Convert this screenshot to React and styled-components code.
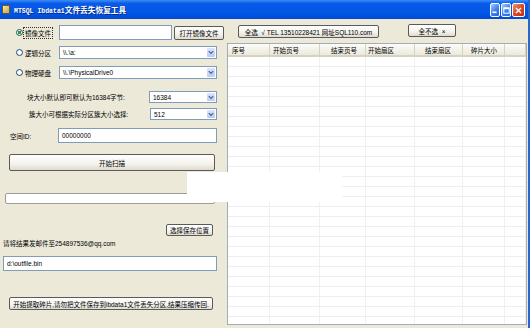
import styled, { createGlobalStyle } from "styled-components";

const GlobalStyle = createGlobalStyle`
  html, body { margin: 0; padding: 0; background: #ece9d8; }
  * { box-sizing: border-box; }
`;

const Window = styled.div`
  position: relative;
  width: 530px;
  height: 328px;
  display: flex;
  flex-direction: column;
  background: #ece9d8;
  border-right: 2px solid #2b63d6;
  overflow: hidden;
  font-family: "Liberation Sans", "Noto Sans CJK SC", sans-serif;
  font-size: 6.5px;
  color: #000;
`;

const TitleBar = styled.div`
  height: 19px;
  display: flex;
  align-items: center;
  padding: 0 3px 0 2px;
  background: linear-gradient(#3d8ef7 0%, #0a5ae8 18%, #0056e4 70%, #0348d6 100%);
  color: #fff;
`;

const TitleIcon = styled.div`
  width: 8px;
  height: 9px;
  margin-right: 4px;
  background: linear-gradient(135deg, #f6e7a8, #c6a64a);
  border: 1px solid #6b5a20;
  border-radius: 1px;
`;

const TitleText = styled.div`
  flex: 1;
  font-weight: bold;
  white-space: nowrap;
  text-shadow: 1px 1px 0 #0a2a80;
`;

const TitleLatin = styled.span`
  font-family: "Liberation Mono", monospace;
  font-size: 6.5px;
`;

const TitleCjk = styled.span`
  font-family: "Noto Sans CJK SC", sans-serif;
  font-size: 7.7px;
`;

const CaptionButtons = styled.div`
  display: flex;
  gap: 1px;
  margin-top: 1px;
`;

const CaptionButton = styled.div`
  width: ${(p) => (p.$close ? 13 : 10)}px;
  height: 14px;
  border: 1px solid #fff;
  border-radius: 2px;
  background: ${(p) =>
    p.$close
      ? "linear-gradient(135deg, #f0957a, #d8441c 55%, #c23210)"
      : "linear-gradient(135deg, #a9c8fb, #3d7df2 55%, #2a62dc)"};
  display: flex;
  align-items: center;
  justify-content: center;
`;

const Body = styled.div`
  flex: 1;
  display: flex;
  gap: 3px;
  padding-left: 3px;
`;

const LeftCol = styled.div`
  width: 221px;
  display: flex;
  flex-direction: column;
`;

const Row = styled.div`
  display: flex;
  align-items: center;
  height: ${(p) => p.$h}px;
  margin-top: ${(p) => p.$mt}px;
  padding-left: ${(p) => p.$pl || 0}px;
`;

const RadioWrap = styled.div`
  width: 56px;
  display: flex;
  align-items: center;
  padding-left: 13px;
`;

const RadioDot = styled.div`
  width: 7px;
  height: 7px;
  border-radius: 50%;
  border: 1px solid #1c5180;
  background: radial-gradient(circle, ${(p) => (p.$on ? "#2a9b2a 0 1.6px" : "#fff 0 1px")}, #fff 1.7px, #dcd9cf 100%);
  margin-right: 1px;
`;

const RadioLabel = styled.span`
  white-space: nowrap;
  padding: 0 1px;
  outline: ${(p) => (p.$focus ? "1px dotted #333" : "none")};
`;

const Label = styled.span`
  white-space: nowrap;
  width: ${(p) => p.$w}px;
`;

const TextBox = styled.div`
  width: ${(p) => p.$w}px;
  height: 100%;
  background: #fff;
  border: 1px solid #7f9db9;
  display: flex;
  align-items: center;
  padding-left: 3px;
  white-space: nowrap;
  overflow: hidden;
`;

const Combo = styled.div`
  width: ${(p) => p.$w}px;
  height: 100%;
  background: #fff;
  border: 1px solid #7f9db9;
  display: flex;
  align-items: center;
  padding-left: 3px;
  white-space: nowrap;
`;

const ComboText = styled.span`
  flex: 1;
`;

const ComboArrow = styled.div`
  width: 8px;
  height: calc(100% - 2px);
  margin-right: 1px;
  border-radius: 1px;
  background: linear-gradient(#dbe6fd, #b6cbf7);
  display: flex;
  align-items: center;
  justify-content: center;
`;

const Button = styled.div`
  width: ${(p) => p.$w}px;
  height: ${(p) => p.$h}px;
  margin-left: ${(p) => p.$ml || 0}px;
  margin-top: ${(p) => p.$mt || 0}px;
  border: 1px solid #5a5a5a;
  border-radius: 2px;
  background: linear-gradient(#ffffff, #f3f2ec 60%, #dedbd0);
  display: flex;
  align-items: center;
  justify-content: center;
  white-space: nowrap;
  flex-shrink: 0;
`;

const Progress = styled.div`
  width: 210px;
  height: 11px;
  margin-left: 2px;
  border: 1px solid #9c9c9c;
  border-radius: 2px;
  background: #fff;
`;

const RightCol = styled.div`
  width: 300px;
  display: flex;
  flex-direction: column;
`;

const ButtonBar = styled.div`
  display: flex;
  align-items: flex-start;
  height: 19px;
  padding-top: 5px;
  margin-bottom: 5px;
`;

const ListView = styled.div`
  height: 282px;
  border: 1px solid #a5acb5;
  background: #fff;
  overflow: hidden;
`;

const GRID = "42px 50px 46px 49px 48px 42px 1fr";

const HeaderRow = styled.div`
  display: grid;
  grid-template-columns: ${GRID};
  height: 13px;
  background: linear-gradient(#fbfbf9, #ebeadb);
  border-bottom: 2px solid #d6d2c2;
`;

const HeaderCell = styled.div`
  display: flex;
  align-items: center;
  padding-left: ${(p) => p.$pad}px;
  border-right: 1px solid #d6d2c2;
  white-space: nowrap;
`;

const DataRow = styled.div`
  display: grid;
  grid-template-columns: ${GRID};
  height: 10px;
  border-bottom: 1px solid #efefef;
`;

const DataCell = styled.div`
  border-right: 1px solid #f0f0f0;
`;

const WhiteBlock = styled.div`
  position: absolute;
  left: 187px;
  top: 172px;
  width: 155px;
  height: 30px;
  background: #fff;
`;

const Chevron = () => (
  <svg width="6" height="5" viewBox="0 0 6 5">
    <path d="M0.8 1.2 L3 3.4 L5.2 1.2" stroke="#4d6185" strokeWidth="1.2" fill="none" />
  </svg>
);

const columns = [
  { t: "序号", pad: 4 },
  { t: "开始页号", pad: 3 },
  { t: "结束页号", pad: 11 },
  { t: "开始扇区", pad: 2 },
  { t: "结束扇区", pad: 10 },
  { t: "碎片大小", pad: 8 },
  { t: "", pad: 0 },
];

const rows = Array.from({ length: 27 }, (_, i) => i);

function ComboBox({ w, value }) {
  return (
    <Combo $w={w}>
      <ComboText>{value}</ComboText>
      <ComboArrow>
        <Chevron />
      </ComboArrow>
    </Combo>
  );
}

export default function App() {
  return (
    <>
      <GlobalStyle />
      <Window>
        <TitleBar>
          <TitleIcon />
          <TitleText>
            <TitleLatin>MTSQL Ibdata1</TitleLatin>
            <TitleCjk>文件丢失恢复工具</TitleCjk>
          </TitleText>
          <CaptionButtons>
            <CaptionButton>
              <svg width="6" height="8" viewBox="0 0 6 8">
                <rect x="0.5" y="5.5" width="4" height="1.6" fill="#fff" />
              </svg>
            </CaptionButton>
            <CaptionButton>
              <svg width="7" height="7" viewBox="0 0 7 7">
                <rect x="0.8" y="0.8" width="5.4" height="5.4" stroke="#fff" strokeWidth="1" fill="none" />
                <rect x="0.8" y="0.8" width="5.4" height="1.4" fill="#fff" />
              </svg>
            </CaptionButton>
            <CaptionButton $close>
              <svg width="7" height="7" viewBox="0 0 7 7">
                <path d="M1 1 L6 6 M6 1 L1 6" stroke="#fff" strokeWidth="1.4" />
              </svg>
            </CaptionButton>
          </CaptionButtons>
        </TitleBar>

        <Body>
          <LeftCol>
            <Row $h={15} $mt={6}>
              <RadioWrap>
                <RadioDot $on />
                <RadioLabel $focus>镜像文件</RadioLabel>
              </RadioWrap>
              <TextBox $w={113} />
              <Button $w={50} $h={14} $ml={2}>打开镜像文件</Button>
            </Row>
            <Row $h={13} $mt={6}>
              <RadioWrap>
                <RadioDot />
                <RadioLabel>逻辑分区</RadioLabel>
              </RadioWrap>
              <ComboBox w={158} value="\\.\a:" />
            </Row>
            <Row $h={13} $mt={7}>
              <RadioWrap>
                <RadioDot />
                <RadioLabel>物理硬盘</RadioLabel>
              </RadioWrap>
              <ComboBox w={158} value="\\.\PhysicalDrive0" />
            </Row>
            <Row $h={12} $mt={12} $pl={24}>
              <Label $w={122}>块大小默认即可默认为16384字节:</Label>
              <ComboBox w={68} value="16384" />
            </Row>
            <Row $h={12} $mt={5} $pl={26}>
              <Label $w={121}>簇大小可根据实际分区簇大小选择:</Label>
              <ComboBox w={67} value="512" />
            </Row>
            <Row $h={15} $mt={8} $pl={7}>
              <Label $w={48}>空间ID:</Label>
              <TextBox $w={159}>00000000</TextBox>
            </Row>
            <Row $h={17} $mt={11}>
              <Button $w={206} $h={17} $ml={6}>开始扫描</Button>
            </Row>
            <Row $h={11} $mt={22}>
              <Progress />
            </Row>
            <Row $h={12} $mt={20}>
              <Button $w={47} $h={12} $ml={163}>选择保存位置</Button>
            </Row>
            <Row $h={10} $mt={2}>
              <Label>请将结果发邮件至254897536@qq.com</Label>
            </Row>
            <Row $h={15} $mt={8}>
              <TextBox $w={214}>d:\outfile.bin</TextBox>
            </Row>
            <Row $h={13} $mt={26}>
              <Button $w={204} $h={13} $ml={6}>
                开始提取碎片,请勿把文件保存到ibdata1文件丢失分区,结果压缩传回.
              </Button>
            </Row>
          </LeftCol>

          <RightCol>
            <ButtonBar>
              <Button $w={141} $h={13} $ml={11} $mt={1}>
                全选 &nbsp;√ TEL 13510228421 网址SQL110.com
              </Button>
              <Button $w={48} $h={13} $ml={29}>
                全不选 &nbsp;×
              </Button>
            </ButtonBar>
            <ListView>
              <HeaderRow>
                {columns.map((c, i) => (
                  <HeaderCell key={i} $pad={c.pad}>
                    {c.t}
                  </HeaderCell>
                ))}
              </HeaderRow>
              {rows.map((r) => (
                <DataRow key={r}>
                  {columns.map((c, i) => (
                    <DataCell key={i} />
                  ))}
                </DataRow>
              ))}
            </ListView>
          </RightCol>
        </Body>
        <WhiteBlock />
      </Window>
    </>
  );
}
